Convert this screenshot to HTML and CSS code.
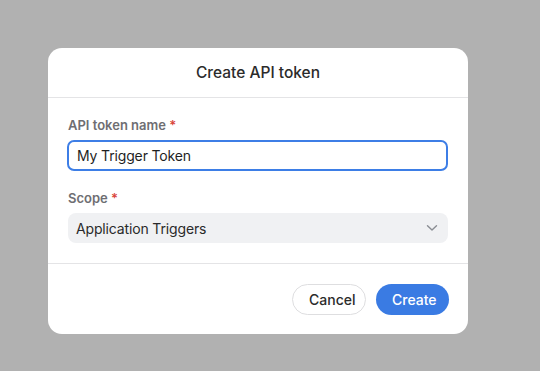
FILE: index.html
```html
<!DOCTYPE html>
<html lang="en">
<head>
<meta charset="UTF-8">
<meta name="viewport" content="width=device-width, initial-scale=1.0">
<title>Create API token</title>
<link rel="stylesheet" href="styles.css">
</head>
<body>

  <div class="modal">
    <div class="modal-header">Create API token</div>

    <div class="modal-body">
      <div class="field">
        <label class="field-label" for="token-name">API token name <span class="req">*</span></label>
        <input class="text-input" id="token-name" type="text" value="My Trigger Token">
      </div>

      <div class="field">
        <label class="field-label">Scope <span class="req">*</span></label>
        <div class="select">
          <span>Application Triggers</span>
          <svg class="chevron" width="12" height="8" viewBox="0 0 12 8"><path d="M1.5 1.8 L6 6 L10.5 1.8" fill="none" stroke="#8a8d93" stroke-width="1.4" stroke-linecap="round" stroke-linejoin="round"/></svg>
        </div>
      </div>
    </div>

    <div class="modal-footer">
      <button class="btn btn-secondary">Cancel</button>
      <button class="btn btn-primary">Create</button>
    </div>
  </div>

</body>
</html>
```

FILE: styles.css
```css
body {
    margin: 0;
    background-color: #b1b1b1;
    font-family: Inter, "Noto Sans", sans-serif;
}

/* Ventana del diálogo */
.modal {
    margin: 48px 0 0 48px;
    width: 420px;
    background-color: #fff;
    border-radius: 14px;
}

.modal-header {
    height: 49px;
    line-height: 50px;
    text-align: center;
    font-size: 15.5px;
    font-weight: 500;
    color: #2b2b2b;
    border-bottom: 1px solid #e4e4e6;
}

.modal-body {
    padding: 19px 20px 20px 20px;
    display: flex;
    flex-direction: column;
    gap: 19px;
}

.field {
    display: flex;
    flex-direction: column;
    gap: 7px;
}

.field-label {
    font-size: 13px;
    font-weight: 600;
    color: #6e6e72;
    line-height: 16px;
}

.req {
    color: #d9453b;
}

.text-input {
    box-sizing: border-box;
    height: 31px;
    margin-left: -1px;
    width: 381px;
    padding: 0 8px;
    border: 2px solid #3d7ee6;
    border-radius: 7px;
    font-family: inherit;
    font-size: 14px;
    letter-spacing: -0.15px;
    color: #1f1f1f;
    outline: none;
}

.select {
    height: 30px;
    padding: 0 10px 0 8px;
    background-color: #f0f1f3;
    border-radius: 8px;
    display: flex;
    align-items: center;
    justify-content: space-between;
    font-size: 14px;
    letter-spacing: -0.15px;
    color: #2a2a2a;
}

.modal-footer {
    border-top: 1px solid #e4e4e6;
    padding: 20px 19px 19px;
    display: flex;
    justify-content: flex-end;
    gap: 10px;
}

.btn {
    height: 31px;
    padding: 0 16px;
    border-radius: 16px;
    font-family: inherit;
    font-size: 14px;
    font-weight: 500;
    cursor: pointer;
}

.btn-secondary {
    background-color: #fff;
    border: 1px solid #dedee0;
    color: #2b2b2b;
    width: 74px;
}

.btn-primary {
    background-color: #3a7be3;
    border: none;
    color: #fff;
    width: 73px;
}
```
